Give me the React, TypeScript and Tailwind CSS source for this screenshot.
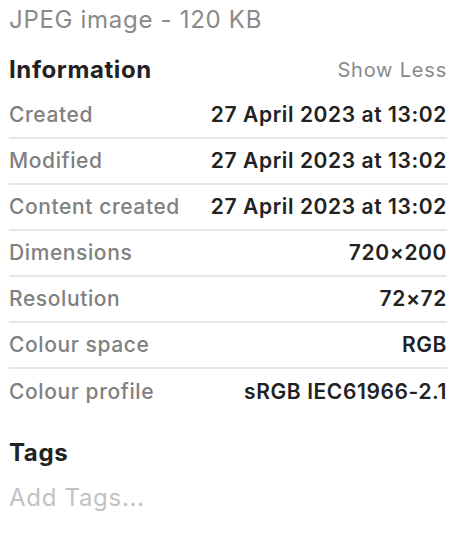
import React from 'react';

const rows: [string, string][] = [
  ['Created', '27 April 2023 at 13:02'],
  ['Modified', '27 April 2023 at 13:02'],
  ['Content created', '27 April 2023 at 13:02'],
  ['Dimensions', '720×200'],
  ['Resolution', '72×72'],
  ['Colour space', 'RGB'],
  ['Colour profile', 'sRGB IEC61966-2.1'],
];

export default function App() {
  return (
    <div className="w-[456px] h-[550px] bg-white pl-[9px] pr-[9px] font-['Inter','Noto_Sans',sans-serif]">
      <div className="h-[40px] flex items-center text-[24px] tracking-[0.7px] text-[#8a8a8a]">
        JPEG image - 120 KB
      </div>

      <div className="h-[53px] pt-[6px] flex items-center justify-between">
        <h2 className="text-[24px] font-bold tracking-[0.6px] text-[#222]">Information</h2>
        <button className="text-[20px] tracking-[0.8px] text-[#8a8a8a]">Show Less</button>
      </div>

      <div className="flex flex-col">
        {rows.map(([label, value], i) => (
          <div
            key={label}
            className={`h-[46px] flex items-center justify-between text-[21px] tracking-[0.6px] ${
              i < rows.length - 1 ? 'border-b-2 border-[#e7e7e7]' : ''
            }`}
          >
            <span className="text-[#808080] font-medium">{label}</span>
            <span className="text-[#222] font-semibold">{value}</span>
          </div>
        ))}
      </div>

      <h2 className="mt-[23px] leading-[30px] text-[24px] font-bold tracking-[0.6px] text-[#222]">Tags</h2>
      <div className="mt-[15px] leading-[30px] text-[24px] tracking-[0.7px] text-[#c2c2c2]">Add Tags...</div>
    </div>
  );
}
